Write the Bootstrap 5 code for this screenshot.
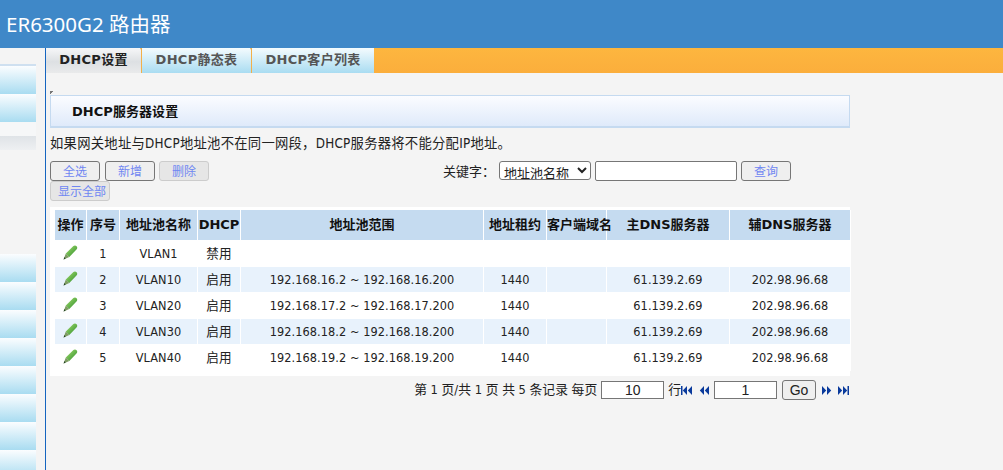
<!DOCTYPE html>
<html lang="zh-CN">
<head>
<meta charset="utf-8">
<title>ER6300G2 路由器</title>
<link rel="stylesheet" href="https://cdn.jsdelivr.net/npm/bootstrap@5.3.0/dist/css/bootstrap.min.css">
<style>
html,body{height:100%;overflow:hidden}
body{background:#f4f4f4;color:#222;font:13.33px/1.2 "DejaVu Sans Condensed","Noto Sans CJK SC",sans-serif}
.topbar{height:48px;background:#3f88c8;color:#fff;font:20.5px/1 "Noto Sans","Noto Sans CJK SC",sans-serif;padding:0 6px}
.shell{height:422px}
.side{width:46px;border-right:1px solid #1565c0;flex:none;padding-top:16px;overflow:hidden}
.side-top{width:36px;height:2px;background:#cfe0f0}
.side-item{width:36px;height:28px;background:linear-gradient(#fbfdff,#a9dcf1)}
.side-item.on{background:linear-gradient(#f6f7f8 50%,#dfe3e7 50%,#eef0f2)}
.side-gap{height:104px}
.work{flex:1;min-width:0}
.tabbar{height:25px;background:linear-gradient(#fdb63f,#fbae3c)}
.tabx{position:relative;font:bold 13px/24px "DejaVu Sans","Noto Sans CJK SC",sans-serif;letter-spacing:.3px;color:#555;text-align:center;background:linear-gradient(#f4fbfe,#a9dcf1);border-right:1px solid #f2b04a}
.tabx.on{color:#222;background:linear-gradient(#f6f7f8,#dde0e3 55%,#e9eaeb)}
.tabx:not(.t3)::after{content:"";position:absolute;top:0;right:-3px;border:2.5px solid transparent;border-top:4px solid #f2b04a;border-bottom:0}
.t1{width:96px}.t2{width:110px}.t3{width:122px;border-right:0}
.pane{width:804px;padding:18px 0 0 4px}
.corner{width:4px;height:4px;background:linear-gradient(135deg,#777 50%,transparent 50%)}
.title-box{height:33px;border:1px solid #c5daf0;border-bottom-width:2px;background:linear-gradient(#fbfcff,#dfeafa);font:bold 13px/32px "DejaVu Sans","Noto Sans CJK SC",sans-serif;letter-spacing:.05px;color:#111;padding-left:21px}
.note{margin:7px 0 0;height:18px;line-height:18px;color:#222;letter-spacing:.25px;white-space:nowrap}
.toolrow{height:21px;margin-top:7px}
.toolrow2{height:20px}
.tbtn{font:12px/1 "Noto Sans CJK SC",sans-serif;color:#6f86f2;background:#efefef;border:1px solid #767676;border-radius:3px;width:50px;height:20px;padding:0}
.tbtn:disabled,.tbtn.off{background:#e6e6e6;border-color:#ccc;color:#6f86f2;opacity:1}
.wide{width:60px;padding-left:4px}
.kw{width:391px;flex:none}
.gap5{column-gap:5px}
.pull1{margin-left:-1px}
.finder{font:13px/1 "Noto Sans CJK SC",sans-serif;color:#222;white-space:nowrap;flex:none}
.pick{width:92px;height:19px;font:13px/1 "Noto Sans CJK SC",sans-serif;color:#222;background:#fff;border:1px solid #767676;border-radius:3px;padding:0}
.box{width:142px;height:20px;border:1px solid #767676;border-radius:2px;background:#fff;padding:0}
.tool-end{width:59px;flex:none}
.tablewrap{background:#fff;margin-top:6px;padding:3px 0 0 4px;height:169px}
table.grid{table-layout:fixed;width:796px;border-collapse:collapse;margin:0;font-size:12.6px;letter-spacing:.08px}
.grid td,.grid th{padding:0;border:1px solid #fff;text-align:center;vertical-align:middle;height:26px;color:#222;background:transparent;box-shadow:none;white-space:nowrap;overflow:visible}
.grid td{padding-top:2px}
.grid tr:first-child th{border-top:0}
.grid th{height:30px;background:#c5dbf0;font:bold 13px/1 "DejaVu Sans","Noto Sans CJK SC",sans-serif;letter-spacing:0;color:#111}
.grid tbody tr:nth-child(even) td{background:#e8f2fc}
.grid svg{display:block;margin:0 auto 3px}
.pager{height:28px;width:800px;font-size:12.8px;color:#222}
.pbox{width:63px;height:18px;border:1px solid #767676;background:#fff;text-align:center;font:14px/1 "Liberation Sans",sans-serif;color:#222;padding:0}
.gobtn{width:34px;height:20px;padding:0;font:14px/1 "Liberation Sans",sans-serif;color:#222;background:#efefef;border:1px solid #767676;border-radius:3px}
.nav-ic{display:block;flex:none}
.g5{margin-left:5px}
.g6{margin-left:6px}
.g7{margin-left:7px}
.end1{margin-right:1px}
</style>
</head>
<body>
<div class="topbar d-flex align-items-center">ER6300G2 路由器</div>
<div class="shell d-flex">
  <div class="side">
    <div class="side-top"></div>
    <div class="side-item"></div>
    <div class="side-item"></div>
    <div class="side-item on"></div>
    <div class="side-gap"></div>
    <div class="side-item"></div><div class="side-item"></div><div class="side-item"></div><div class="side-item"></div>
    <div class="side-item"></div><div class="side-item"></div><div class="side-item"></div><div class="side-item"></div>
  </div>
  <div class="work">
    <div class="tabbar d-flex">
      <div class="tabx on t1">DHCP设置</div>
      <div class="tabx t2">DHCP静态表</div>
      <div class="tabx t3">DHCP客户列表</div>
    </div>
    <div class="pane">
      <div class="corner"></div>
      <div class="title-box">DHCP服务器设置</div>
      <p class="note">如果网关地址与DHCP地址池不在同一网段，DHCP服务器将不能分配IP地址。</p>
      <div class="toolrow d-flex align-items-center">
        <div class="kw d-flex gap5">
          <button class="tbtn" type="button">全选</button>
          <button class="tbtn" type="button">新增</button>
          <button class="tbtn off pull1" type="button" disabled>删除</button>
        </div>
        <div class="finder d-flex align-items-center ms-auto">
          <span class="me-1">关键字：</span>
          <select class="pick me-1"><option>地址池名称</option></select>
          <input class="box me-1" type="text" aria-label="关键字">
          <button class="tbtn" type="button">查询</button>
        </div>
        <div class="tool-end"></div>
      </div>
      <div class="toolrow2 d-flex align-items-center"><button class="tbtn off wide" type="button" disabled>显示全部</button></div>
      <div class="tablewrap">
        <svg width="0" height="0" class="position-absolute">
          <defs>
            <linearGradient id="g" x1="0" y1="0" x2="1" y2="1"><stop offset="0" stop-color="#a5e070"/><stop offset="1" stop-color="#2c8a28"/></linearGradient>
            <symbol id="pen" viewBox="0 0 15 15">
              <path d="M2.800 8.600 10.400 1.100c1-.9 2.500-.6 3.200.2.800.8.900 2 .1 2.900L6.300 12z" fill="url(#g)"/>
              <path d="M2.800 8.600 .6 14.500 6.300 12z" fill="#7d9c62"/>
              <path d="M.6 14.500 1.500 12.100l1.100 1.300z" fill="#1f3d1f"/>
            </symbol>
          </defs>
        </svg>
        <table class="grid table">
          <colgroup><col style="width:32px"><col style="width:33px"><col style="width:78px"><col style="width:43px"><col style="width:243px"><col style="width:63px"><col style="width:60px"><col style="width:123px"><col style="width:121px"></colgroup>
          <thead><tr><th>操作</th><th>序号</th><th>地址池名称</th><th>DHCP</th><th>地址池范围</th><th>地址租约</th><th>客户端域名</th><th>主DNS服务器</th><th>辅DNS服务器</th></tr></thead>
          <tbody>
            <tr><td><svg width="15" height="15"><use href="#pen"/></svg></td><td>1</td><td>VLAN1</td><td>禁用</td><td></td><td></td><td></td><td></td><td></td></tr>
            <tr><td><svg width="15" height="15"><use href="#pen"/></svg></td><td>2</td><td>VLAN10</td><td>启用</td><td>192.168.16.2 ~ 192.168.16.200</td><td>1440</td><td></td><td>61.139.2.69</td><td>202.98.96.68</td></tr>
            <tr><td><svg width="15" height="15"><use href="#pen"/></svg></td><td>3</td><td>VLAN20</td><td>启用</td><td>192.168.17.2 ~ 192.168.17.200</td><td>1440</td><td></td><td>61.139.2.69</td><td>202.98.96.68</td></tr>
            <tr><td><svg width="15" height="15"><use href="#pen"/></svg></td><td>4</td><td>VLAN30</td><td>启用</td><td>192.168.18.2 ~ 192.168.18.200</td><td>1440</td><td></td><td>61.139.2.69</td><td>202.98.96.68</td></tr>
            <tr><td><svg width="15" height="15"><use href="#pen"/></svg></td><td>5</td><td>VLAN40</td><td>启用</td><td>192.168.19.2 ~ 192.168.19.200</td><td>1440</td><td></td><td>61.139.2.69</td><td>202.98.96.68</td></tr>
          </tbody>
        </table>
      </div>
      <div class="pager d-flex align-items-center justify-content-end">
        <span class="me-1">第 1 页/共 1 页 共 5 条记录 每页</span>
        <input class="pbox me-1" value="10" aria-label="每页">
        <span>行</span>
        <svg class="nav-ic" width="11" height="9" viewBox="0 0 11 9" fill="#0a3a9c"><path d="M0 0h1.500v9H0zM6 0v9L1.800 4.500zM11 0v9L6.800 4.500z"/></svg>
        <svg class="nav-ic g7" width="10" height="9" viewBox="0 0 10 9" fill="#0a3a9c"><path d="M5 0v9L.8 4.500zM10 0v9L5.800 4.500z"/></svg>
        <input class="pbox g5" value="1" aria-label="页码">
        <button class="gobtn g5" type="button">Go</button>
        <svg class="nav-ic g6" width="10" height="9" viewBox="0 0 10 9" fill="#0a3a9c"><path d="M0 0v9L4.200 4.500zM5 0v9L9.200 4.500z"/></svg>
        <svg class="nav-ic g6 end1" width="11" height="9" viewBox="0 0 11 9" fill="#0a3a9c"><path d="M0 0v9L4.200 4.500zM5 0v9L9.200 4.500zM9.500 0H11v9H9.500z"/></svg>
      </div>
    </div>
  </div>
</div>
</body>
</html>
